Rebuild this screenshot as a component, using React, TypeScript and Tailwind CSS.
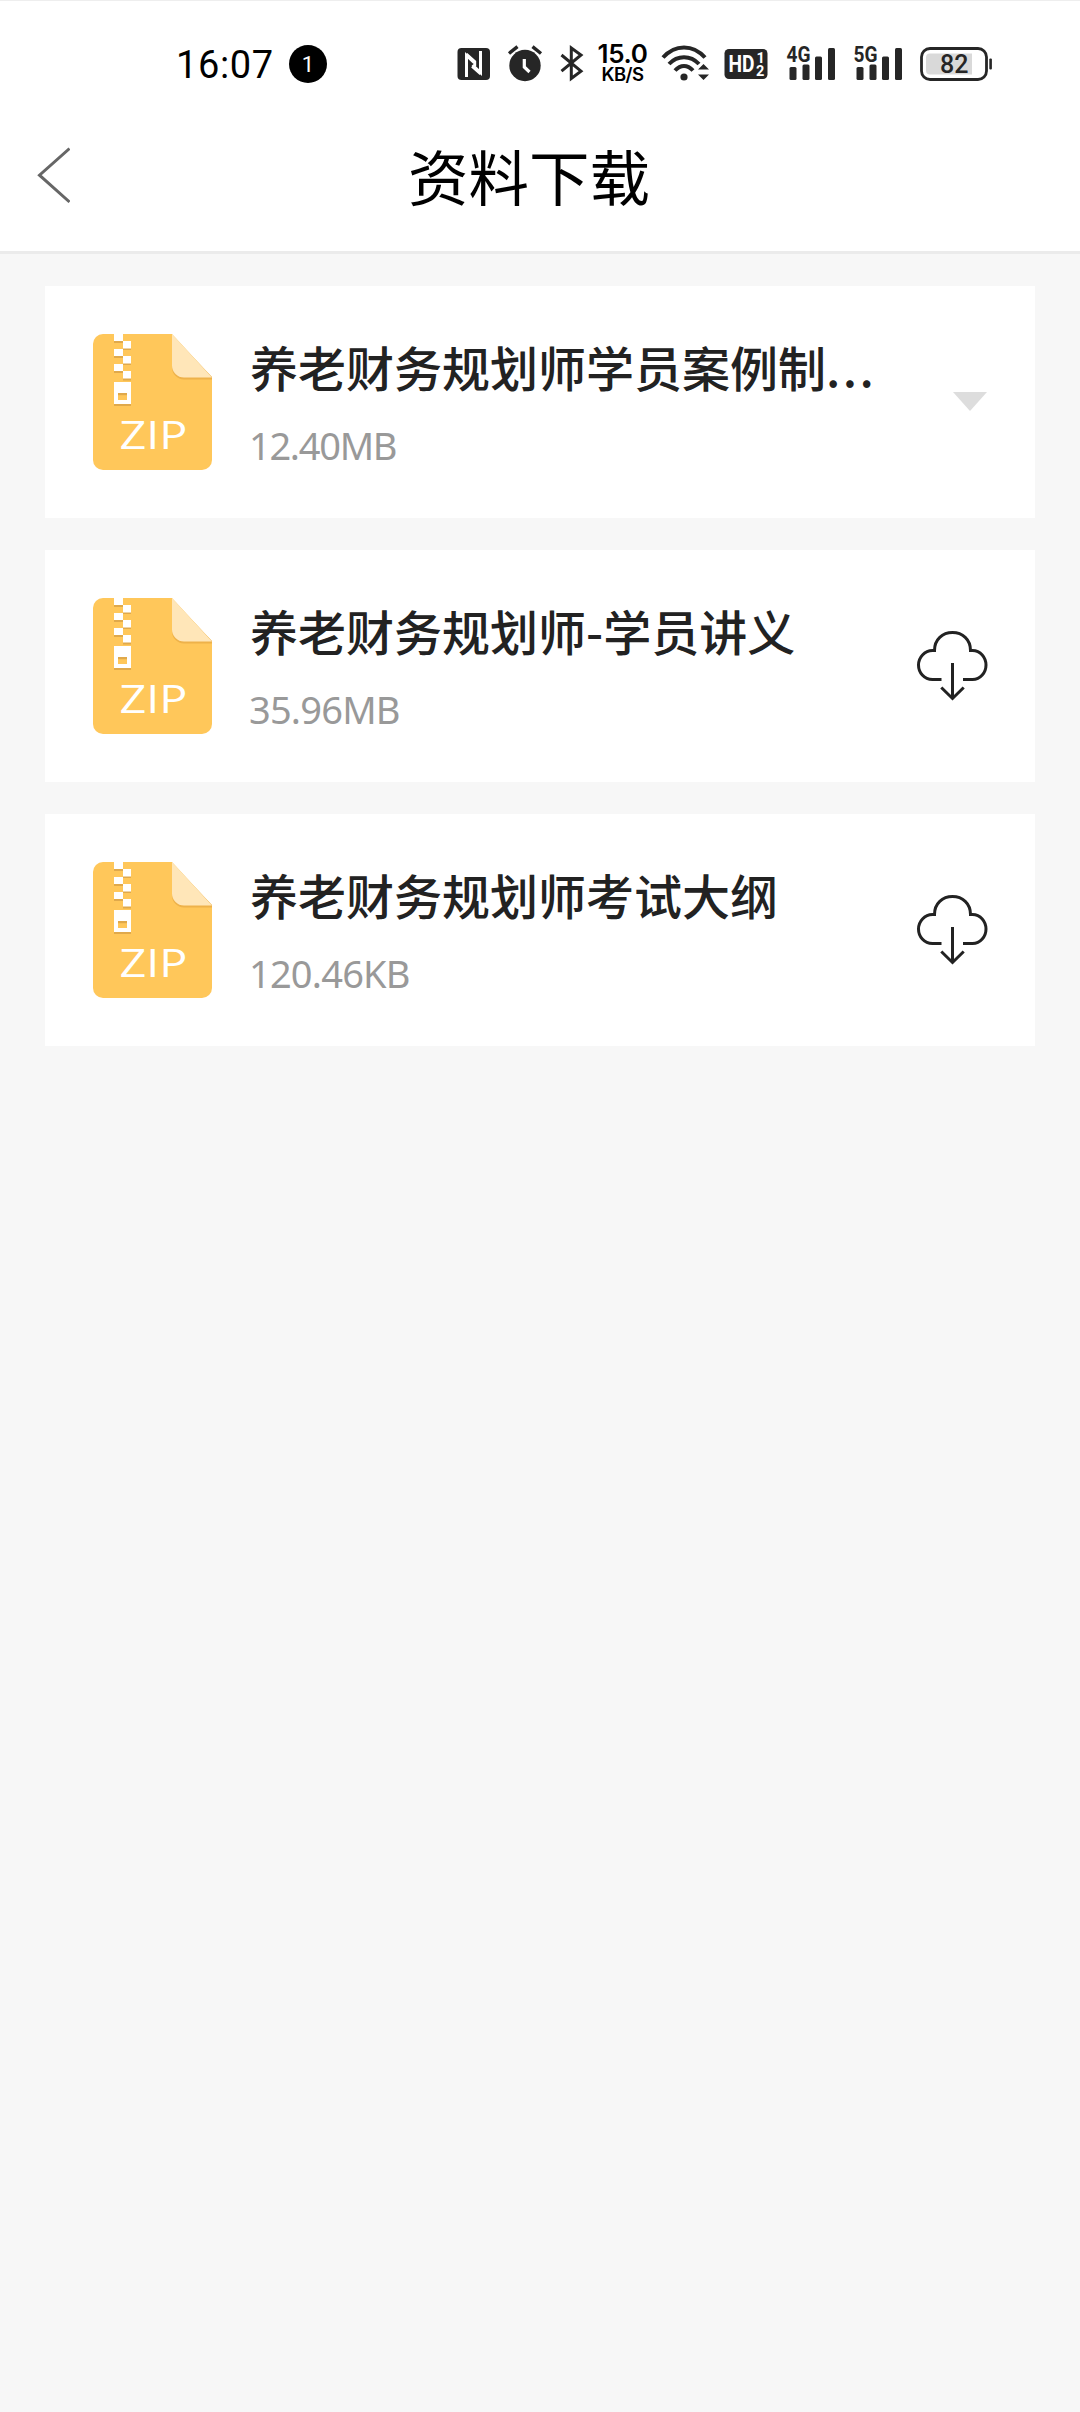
const files = [
  { name: '养老财务规划师学员案例制', truncated: true, size: '12.40MB', tracking: 'tracking-[-1.300px]', downloaded: true },
  { name: '养老财务规划师-学员讲义', truncated: false, size: '35.96MB', tracking: 'tracking-[-0.800px]', downloaded: false },
  { name: '养老财务规划师考试大纲', truncated: false, size: '120.46KB', tracking: 'tracking-[-0.800px]', downloaded: false },
];

function NfcIcon() {
  return (
    <svg className="ml-[130px] h-[34px] w-[34px]" viewBox="0 0 34 34">
      <rect x="0.5" y="1" width="32.5" height="32" rx="4" fill="#262626" />
      <path d="M9.5 30V8.5L17.5 16M23.5 4v21.5L15.5 18" fill="none" stroke="#fff" strokeWidth="3" />
      <path d="M9.5 7L18 14.5v4.5M23.5 27L15 19.5" fill="none" stroke="#fff" strokeWidth="2.4" />
    </svg>
  );
}

function AlarmIcon() {
  return (
    <svg className="ml-[16px] h-[38px] w-[36px]" viewBox="0 0 36 38">
      <circle cx="18" cy="20.500" r="15.7" fill="#262626" />
      <path d="M2 8.5L10.5 1.700M25.500 1.700L34 8.5" stroke="#262626" strokeWidth="3.4" />
      <path d="M17.3 14v8l5.2 5" fill="none" stroke="#fff" strokeWidth="3.2" />
    </svg>
  );
}

function BluetoothIcon() {
  return (
    <svg className="ml-[17px] h-[38px] w-[24px]" viewBox="0 0 24 38">
      <path d="M1.5 10L21 26.2 11.3 33.5V3L21 10 1.5 26.2" fill="none" stroke="#262626" strokeWidth="3" />
    </svg>
  );
}

function WifiIcon() {
  return (
    <svg className="ml-[12px] h-[38px] w-[50px]" viewBox="0 0 50 38">
      <g fill="none" stroke="#262626" strokeWidth="4">
        <path d="M2 12.5C14 -1 32 -1 44 12.5" />
        <path d="M8 19C16.500 10 29.500 10 38 19" />
        <path d="M14 25.500C19.500 19.500 26.500 19.500 32 25.500" />
      </g>
      <circle cx="23" cy="32" r="3.600" fill="#262626" />
      <path d="M37 24.500L42.500 19l5.500 5.500zM37 29.500L42.500 35l5.500-5.500z" fill="#262626" />
    </svg>
  );
}

function HdIcon() {
  return (
    <svg className="ml-[13px] h-[32px] w-[44px]" viewBox="0 0 44 32">
      <rect x="0.500" y="1" width="43" height="30" rx="4.500" fill="#262626" />
      <g fill="#fff" fontFamily="Roboto" fontWeight="700">
        <text x="4.500" y="24" fontSize="23" textLength="26" lengthAdjust="spacingAndGlyphs">HD</text>
        <text x="32.500" y="15" fontSize="14.500">1</text>
        <text x="32" y="27.500" fontSize="14.500">2</text>
      </g>
    </svg>
  );
}

function Signal({ label, className }: { label: string; className: string }) {
  return (
    <svg className={className} viewBox="0 0 50 38">
      <text x="0.500" y="17.300" fill="#262626" fontFamily="Roboto" fontWeight="700" fontSize="22" textLength="24" lengthAdjust="spacingAndGlyphs">
        {label}
      </text>
      <g fill="#262626">
        <rect x="3.500" y="22" width="7" height="13" rx="1.500" />
        <rect x="16.500" y="19.500" width="7" height="15.500" rx="1.500" />
        <rect x="29" y="11.500" width="7" height="23.500" rx="1.500" />
        <rect x="42" y="3" width="7" height="32" rx="1.500" />
      </g>
    </svg>
  );
}

function BatteryIcon() {
  return (
    <svg className="ml-[17px] h-[34px] w-[73px]" viewBox="0 0 73 34">
      <rect x="1.500" y="1.500" width="65" height="31" rx="8.500" fill="#fff" stroke="#262626" strokeWidth="2.800" />
      <path d="M10 6.500h42v21H10a4 4 0 0 1-4-4v-13a4 4 0 0 1 4-4z" fill="#d9d9d9" />
      <rect x="69.300" y="11.500" width="2.600" height="11" rx="1" fill="#262626" />
      <text x="34.300" y="26" textAnchor="middle" fill="#262626" fontFamily="Roboto" fontWeight="500" fontSize="25">
        82
      </text>
    </svg>
  );
}

function StatusBar() {
  return (
    <div className="flex h-[125px] items-center pl-[176px]">
      <span className="w-[98px] pt-[3px] font-[Roboto,sans-serif] text-[38px] leading-none tracking-[0.6px] text-black">16:07</span>
      <span className="ml-[15px] flex h-[38px] w-[38px] items-center justify-center rounded-full bg-black pt-[2px] font-[Roboto,sans-serif] text-[22px] leading-none text-white">
        1
      </span>
      <NfcIcon />
      <AlarmIcon />
      <BluetoothIcon />
      <div className="ml-[12px] flex w-[53px] flex-col items-center font-[Inter,sans-serif] text-black">
        <span className="text-[26px] leading-[21px] font-semibold tracking-[-0.4px]">15.0</span>
        <span className="text-[18.500px] leading-[20px] font-semibold tracking-[-0.5px]">KB/S</span>
      </div>
      <WifiIcon />
      <HdIcon />
      <Signal label="4G" className="ml-[18px] h-[38px] w-[50px]" />
      <Signal label="5G" className="ml-[17px] h-[38px] w-[50px]" />
      <BatteryIcon />
    </div>
  );
}

function Header() {
  return (
    <div className="flex h-[125px] items-start">
      <svg className="mt-[21px] ml-[36px] h-[58px] w-[34px]" viewBox="0 0 34 58">
        <path d="M33.500 1.500L3.500 28.200 33.500 55" fill="none" stroke="#666" strokeWidth="3" />
      </svg>
      <h1 className="ml-[338px] pt-[18px] font-['Noto_Sans_CJK_SC',sans-serif] text-[60.500px] leading-[61px] text-black">资料下载</h1>
    </div>
  );
}

function ZipIcon() {
  return (
    <svg className="h-[136px] w-[119px] shrink-0" viewBox="0 0 119 136">
      <path d="M10 0H79L119 43.500V126a10 10 0 0 1-10 10H10a10 10 0 0 1-10-10V10A10 10 0 0 1 10 0z" fill="#ffc75a" />
      <path d="M79 1V33a12 12 0 0 0 12 12.500H119V43z" fill="#eeb24a" />
      <path d="M79 0V31.500a12 12 0 0 0 12 12H119z" fill="#ffe6b8" />
      <g fill="#e0a94b">
        <path d="M21 7h9v2h-9zM30 14h8v2h-8zM21 22h9v2h-9zM30 29h8v2h-8zM21 37h9v2h-9zM30 44h8v2.500h-8zM21 70h17v2H21z" />
      </g>
      <g fill="#fff">
        <path d="M21 0h9v7h-9zM30 7h8v7.500h-8zM21 15h9v7h-9zM30 22h8v7.500h-8zM21 30h9v7h-9zM30 37h8v7.500h-8zM21 48h17v22H21z" />
        <text x="26.500" y="115" fontFamily="Open Sans" fontSize="39" textLength="68" lengthAdjust="spacingAndGlyphs">
          ZIP
        </text>
      </g>
      <path d="M25 59h9v7h-9z" fill="#ffc75a" />
      <path d="M25 59h9v2.200h-9z" fill="#e0a94b" />
    </svg>
  );
}

function CloudDownloadIcon() {
  return (
    <svg className="mr-[47px] h-[72px] w-[72px] shrink-0" viewBox="0 0 72 72">
      <g fill="none" stroke="#222" strokeWidth="3">
        <path d="M25.500 49.500H16.500C8 49.500 2.500 42.500 2.500 35S8.500 20.500 16.500 20.500H18.500C18.500 9.500 26.500 2.500 36.500 2.500S54.500 9.500 54.500 20.500H56.500C64.500 20.500 70 27.500 70 35S64.500 49.500 56.500 49.500H47" />
        <path d="M36.500 33V68M25.300 57.500L36.500 68.500 47.700 57.500" />
      </g>
    </svg>
  );
}

export default function App() {
  return (
    <div className="min-h-[2412px] w-[1080px] bg-[#f7f7f7]">
      <header className="h-[254px] border-t border-b-[3px] border-t-[#eee] border-b-[#ebebeb] bg-white">
        <StatusBar />
        <Header />
      </header>
      <main className="flex flex-col gap-8 px-[45px] pt-8">
        {files.map((file) => (
          <article key={file.name} className="flex h-[232px] items-center bg-white pl-12">
            <ZipIcon />
            <div className="ml-[38px] w-[631px] shrink-0">
              <h2 className="mt-[-2px] font-['Noto_Sans_CJK_SC',sans-serif] text-[48px] leading-[72px] font-medium whitespace-nowrap text-[#222]">
                {file.name}
                {file.truncated && <span className="tracking-[2.500px]">...</span>}
              </h2>
              <p className={`mt-[15px] ml-[-1px] font-['Noto_Sans',sans-serif] text-[38px] leading-[56px] text-[#999] ${file.tracking}`}>
                {file.size}
              </p>
            </div>
            <div className="flex flex-1 justify-end">
              {file.downloaded ? (
                <svg className="mr-[48px] mb-[1px] h-[19px] w-[34px]" viewBox="0 0 34 19">
                  <path d="M0 0H34L17 19z" fill="#ddd" />
                </svg>
              ) : (
                <CloudDownloadIcon />
              )}
            </div>
          </article>
        ))}
      </main>
    </div>
  );
}
